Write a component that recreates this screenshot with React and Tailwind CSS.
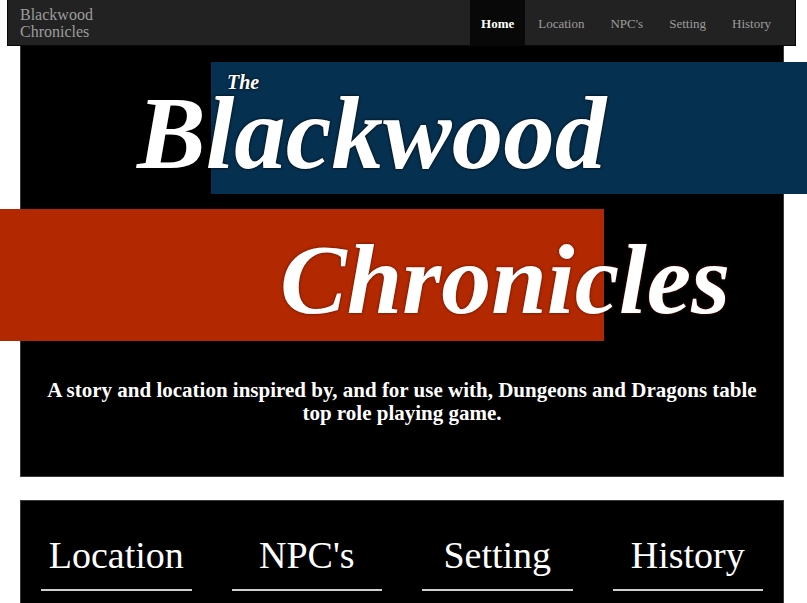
const navItems = ["Home", "Location", "NPC's", "Setting", "History"];
const sections = ["Location", "NPC's", "Setting", "History"];

function Navbar() {
  return (
    <nav className="ml-[7px] w-[789px] h-[46px] flex items-stretch justify-between bg-[#222] border border-[#080808] border-t-0">
      <div className="pl-[12px] flex flex-col justify-center text-[16px] leading-[17px] text-[#9d9d9d]">
        <span>Blackwood</span>
        <span>Chronicles</span>
      </div>
      <ul className="flex items-stretch mr-[11px] text-[13px]">
        {navItems.map((item, i) => (
          <li
            key={item}
            className={
              i === 0
                ? "px-[11px] pt-[3px] flex items-center bg-[#080808] text-white font-bold"
                : "px-[13px] pt-[3px] flex items-center text-[#9d9d9d]"
            }
          >
            {item}
          </li>
        ))}
      </ul>
    </nav>
  );
}

function Hero() {
  return (
    <section className="ml-[20px] w-[764px] h-[431px] bg-black border border-[#3a3a3a] border-t-0 pt-[16px] flex flex-col">
      <div className="ml-[190px] mr-[-24px] h-[132px] bg-[#06304f] flex flex-col text-white italic font-bold [text-shadow:0_0_3px_#000]">
        <span className="ml-[16px] mt-[10px] text-[20px] leading-none">The</span>
        <span className="ml-[-74px] mt-[1px] text-[103px] leading-[80px]">Blackwood</span>
      </div>
      <div className="ml-[-21px] mt-[15px] w-[604px] h-[132px] bg-[#b22800] flex">
        <span className="ml-[280px] mt-[31px] whitespace-nowrap text-[100px] leading-[80px] italic font-bold text-white [text-shadow:0_0_3px_#5a1000]">
          Chronicles
        </span>
      </div>
      <p className="mt-[38px] px-[24px] text-center text-white font-bold text-[21px] leading-[23px] [text-shadow:0_0_2px_#000]">
        A story and location inspired by, and for use with, Dungeons and Dragons table top role playing game.
      </p>
    </section>
  );
}

function Sections() {
  return (
    <section className="ml-[20px] mt-[23px] w-[764px] h-[140px] bg-black border border-[#3a3a3a] grid grid-cols-4">
      {sections.map((s) => (
        <div key={s} className="px-[20px] pt-[32px]">
          <h2 className="text-center text-white text-[38px] leading-[44px]">{s}</h2>
          <div className="mt-[12px] h-[2px] bg-[#cfcfcf]" />
        </div>
      ))}
    </section>
  );
}

export default function App() {
  return (
    <div className="min-h-screen bg-white overflow-hidden font-['Liberation_Serif',serif]">
      <Navbar />
      <Hero />
      <Sections />
    </div>
  );
}
